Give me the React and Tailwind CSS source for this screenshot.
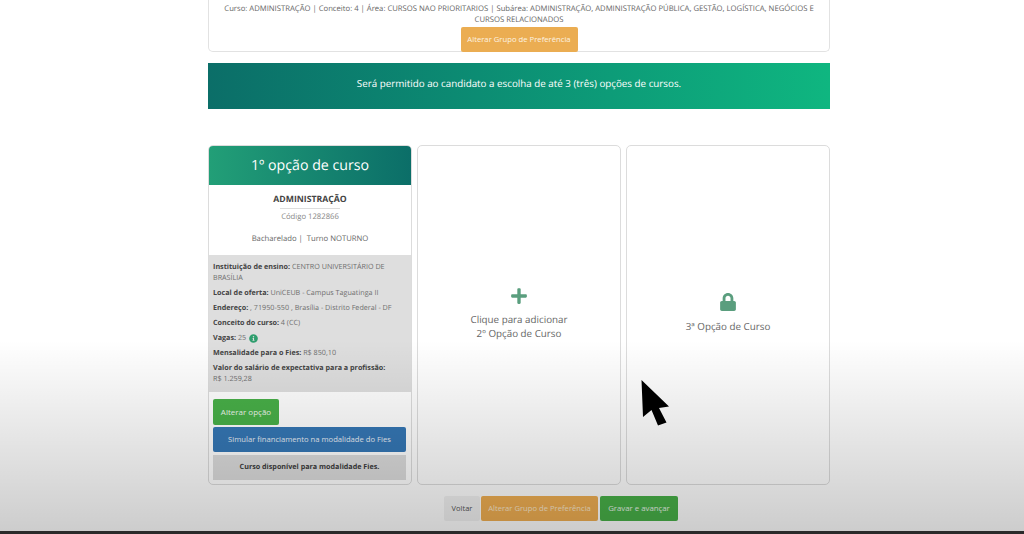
import { FaPlus, FaLock, FaInfoCircle } from "react-icons/fa";

const info = [
  { label: "Instituição de ensino:", value: " CENTRO UNIVERSITÁRIO DE BRASÍLIA" },
  { label: "Local de oferta:", value: " UniCEUB - Campus Taguatinga II" },
  { label: "Endereço:", value: " , 71950-550 , Brasília - Distrito Federal - DF" },
  { label: "Conceito do curso:", value: " 4 (CC)" },
];

function EmptyCard({ children, className }) {
  return (
    <div className={`w-[204px] h-[340px] bg-white border border-[#dcdcdc] rounded-[5px] flex flex-col items-center justify-center text-[9.8px] leading-[14px] text-[#666] text-center ${className}`}>
      {children}
    </div>
  );
}

export default function App() {
  return (
    <div className="relative h-[534px] overflow-hidden bg-white font-['Open_Sans',sans-serif] text-[#666] [text-rendering:geometricPrecision]">
      <div className="w-[622px] ml-[208px]">
        <div className="h-[52px] bg-white border-x border-b border-[#e2e2e2] rounded-b-[5px] pt-[4px] flex flex-col items-center text-center">
          <p className="text-[7.7px] leading-[11px] px-[10px]">
            Curso: ADMINISTRAÇÃO | Conceito: 4 | Área: CURSOS NAO PRIORITARIOS | Subárea: ADMINISTRAÇÃO, ADMINISTRAÇÃO PÚBLICA, GESTÃO, LOGÍSTICA, NEGÓCIOS E CURSOS RELACIONADOS
          </p>
          <button className="mt-[1px] w-[117px] h-[25px] shrink-0 bg-[#ebad52] text-[#fdf3e2] text-[7.7px] rounded-[2px]">
            Alterar Grupo de Preferência
          </button>
        </div>

        <div className="mt-[11px] h-[46px] pb-[3px] flex items-center justify-center bg-gradient-to-r from-[#0b6e68] to-[#0fb680] text-white text-[9.8px]">
          Será permitido ao candidato a escolha de até 3 (três) opções de cursos.
        </div>

        <div className="mt-[36px] flex gap-[5px]">
          <div className="w-[204px] h-[340px] bg-white border border-[#dcdcdc] rounded-[5px] overflow-hidden flex flex-col">
            <div className="h-[39px] shrink-0 flex items-center justify-center bg-gradient-to-r from-[#229f77] to-[#0b6e68] text-white text-[14.2px]">
              1º opção de curso
            </div>
            <div className="h-[70px] shrink-0 flex flex-col items-center text-[7.7px]">
              <div className="mt-[8px] text-[8.7px] leading-[13px] font-bold text-[#444] pb-[2px]">
                ADMINISTRAÇÃO
              </div>
              <div className="w-[60px] h-px bg-[#ddd]" />
              <div className="mt-[2px] leading-[12px] text-[#888]">Código 1282866</div>
              <div className="mt-[10px] leading-[12px]">Bacharelado |&nbsp; Turno NOTURNO</div>
            </div>
            <div className="h-[137px] shrink-0 bg-[#dedede] px-[4px] pt-[7px] text-[7.2px] leading-[11px] text-[#6e6e6e]">
              {info.map((row) => (
                <p key={row.label} className="mb-[4px]">
                  <b className="text-[#444]">{row.label}</b>
                  {row.value}
                </p>
              ))}
              <p className="mb-[4px] flex items-center gap-[3px]">
                <span>
                  <b className="text-[#444]">Vagas:</b> 25
                </span>
                <FaInfoCircle className="text-[#2f9e6e] text-[9px]" />
              </p>
              <p className="mb-[4px]">
                <b className="text-[#444]">Mensalidade para o Fies:</b> R$ 850,10
              </p>
              <p className="font-bold text-[#444]">Valor do salário de expectativa para a profissão:</p>
              <p>R$ 1.259,28</p>
            </div>
            <div className="flex-1 px-[4px] pt-[7px] flex flex-col items-start gap-[2px]">
              <button className="w-[66px] h-[26px] bg-[#48b048] text-[#eef7ee] text-[8px] rounded-[2px]">
                Alterar opção
              </button>
              <button className="w-[193px] h-[25px] bg-[#3577b5] text-[#e8eef5] text-[7.65px] rounded-[2px]">
                Simular financiamento na modalidade do Fies
              </button>
              <div className="mt-[1px] w-[193px] h-[25px] flex items-center justify-center bg-[#dcdcdc] text-[#3c3c3c] text-[7.2px] font-bold">
                Curso disponível para modalidade Fies.
              </div>
            </div>
          </div>

          <EmptyCard className="pb-[3px]">
            <FaPlus className="text-[#5a9e7e] text-[18px] mb-[8px]" />
            <div>Clique para adicionar</div>
            <div>2º Opção de Curso</div>
          </EmptyCard>

          <EmptyCard className="pb-[4px]">
            <FaLock className="text-[#5a9e7e] text-[18px] mb-[9px]" />
            <div>3ª Opção de Curso</div>
          </EmptyCard>
        </div>

        <div className="mt-[11px] ml-[236px] flex gap-px">
          <button className="w-[36px] h-[25px] bg-[#f2f2f2] text-[#555] text-[7.5px] rounded-[2px]">Voltar</button>
          <button className="w-[117px] h-[25px] bg-[#efae52] text-[#fbe9cc] text-[7.65px] rounded-[2px]">Alterar Grupo de Preferência</button>
          <button className="ml-px w-[78px] h-[25px] bg-[#48b048] text-[#eaf5ea] text-[7.8px] rounded-[2px]">Gravar e avançar</button>
        </div>
      </div>

      {/* video player shade and cursor lie over the page */}
      <div className="absolute inset-x-0 bottom-0 h-[194px] bg-gradient-to-b from-transparent to-black/20 pointer-events-none" />
      <div className="absolute inset-x-0 bottom-0 h-[3px] bg-[#2a2a2a]" />
      <svg className="absolute left-[640px] top-[379px]" width="30" height="48" viewBox="0 0 30 48">
        <path d="M1.5 1 L29 27.5 L19 29 L26.5 43.5 L18 46.5 L11.5 31 L3 38 Z" fill="#000" />
      </svg>
    </div>
  );
}
